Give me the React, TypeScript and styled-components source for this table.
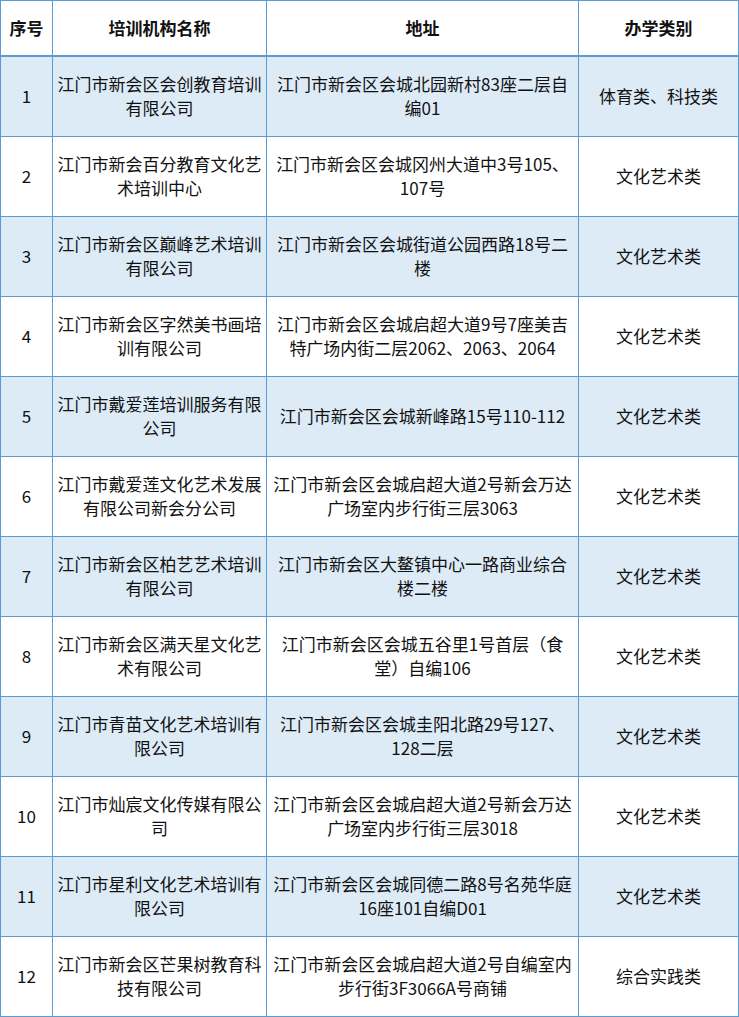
import React from "react";
import styled, { createGlobalStyle } from "styled-components";

const Global = createGlobalStyle`
  html, body { margin: 0; padding: 0; background: #ffffff; }
  body { font-family: "Noto Sans CJK SC", "Noto Sans", sans-serif; color: #111111; }
`;

const Table = styled.table`
  width: 738px;
  border-collapse: collapse;
  table-layout: fixed;
  font-size: 17px;
  line-height: 24px;
`;

const Col = styled.col<{ $w: number }>`
  width: ${(p) => p.$w}px;
`;

const HeadCell = styled.th`
  height: 54px;
  padding: 0 4px;
  border: 1px solid #5b9bd5;
  border-bottom: 2px solid #5b9bd5;
  font-weight: 700;
  text-align: center;
  vertical-align: middle;
  color: #111;
  background: #ffffff;
`;

const Row = styled.tr<{ $shaded: boolean }>`
  background: ${(p) => (p.$shaded ? "#ddebf7" : "#ffffff")};
`;

const Cell = styled.td`
  height: 77px;
  padding: 0 4px 2px;
  border: 1px solid #5b9bd5;
  text-align: center;
  vertical-align: middle;
  word-break: normal;
  overflow-wrap: break-word;
`;

const rows: [string, string, string][] = [
  ["江门市新会区会创教育培训有限公司", "江门市新会区会城北园新村83座二层自编01", "体育类、科技类"],
  ["江门市新会百分教育文化艺术培训中心", "江门市新会区会城冈州大道中3号105、107号", "文化艺术类"],
  ["江门市新会区巅峰艺术培训有限公司", "江门市新会区会城街道公园西路18号二楼", "文化艺术类"],
  ["江门市新会区字然美书画培训有限公司", "江门市新会区会城启超大道9号7座美吉特广场内街二层2062、2063、2064", "文化艺术类"],
  ["江门市戴爱莲培训服务有限公司", "江门市新会区会城新峰路15号110-112", "文化艺术类"],
  ["江门市戴爱莲文化艺术发展有限公司新会分公司", "江门市新会区会城启超大道2号新会万达广场室内步行街三层3063", "文化艺术类"],
  ["江门市新会区柏艺艺术培训有限公司", "江门市新会区大鳌镇中心一路商业综合楼二楼", "文化艺术类"],
  ["江门市新会区满天星文化艺术有限公司", "江门市新会区会城五谷里1号首层（食堂）自编106", "文化艺术类"],
  ["江门市青苗文化艺术培训有限公司", "江门市新会区会城圭阳北路29号127、128二层", "文化艺术类"],
  ["江门市灿宸文化传媒有限公司", "江门市新会区会城启超大道2号新会万达广场室内步行街三层3018", "文化艺术类"],
  ["江门市星利文化艺术培训有限公司", "江门市新会区会城同德二路8号名苑华庭16座101自编D01", "文化艺术类"],
  ["江门市新会区芒果树教育科技有限公司", "江门市新会区会城启超大道2号自编室内步行街3F3066A号商铺", "综合实践类"],
];

export default function App() {
  return (
    <>
      <Global />
      <Table>
        <colgroup>
          <Col $w={52} />
          <Col $w={214} />
          <Col $w={312} />
          <Col $w={160} />
        </colgroup>
        <thead>
          <tr>
            <HeadCell>序号</HeadCell>
            <HeadCell>培训机构名称</HeadCell>
            <HeadCell>地址</HeadCell>
            <HeadCell>办学类别</HeadCell>
          </tr>
        </thead>
        <tbody>
          {rows.map((r, i) => (
            <Row key={i} $shaded={i % 2 === 0}>
              <Cell>{i + 1}</Cell>
              <Cell>{r[0]}</Cell>
              <Cell>{r[1]}</Cell>
              <Cell>{r[2]}</Cell>
            </Row>
          ))}
        </tbody>
      </Table>
    </>
  );
}
